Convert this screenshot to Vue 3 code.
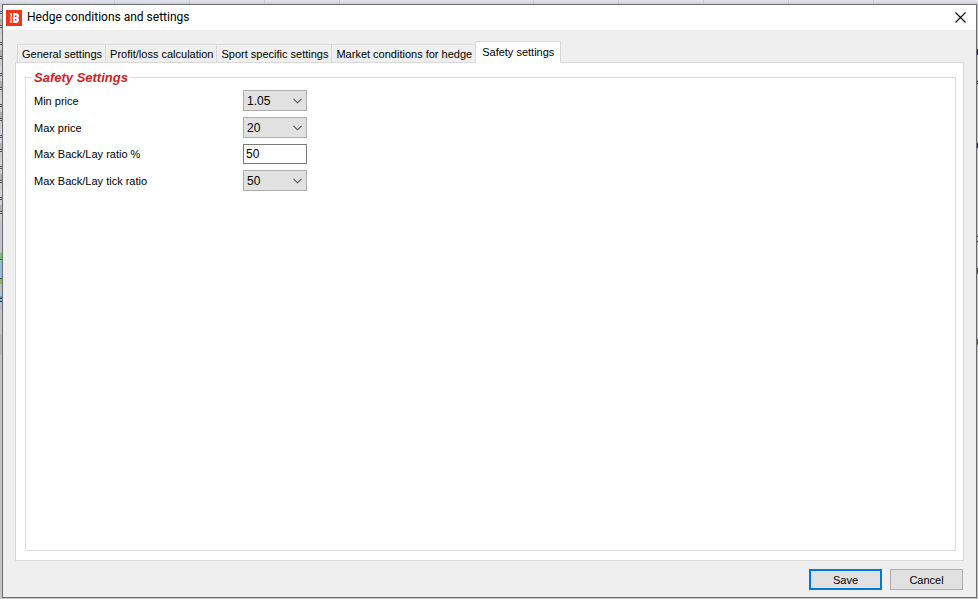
<script setup>
import { ref } from 'vue'

const tabs = [
  'General settings',
  'Profit/loss calculation',
  'Sport specific settings',
  'Market conditions for hedge',
  'Safety settings',
]
const activeTab = ref('Safety settings')

const fields = ref([
  { id: 'min-price', label: 'Min price', value: '1.05', options: ['1.01', '1.05', '1.10'] },
  { id: 'max-price', label: 'Max price', value: '20', options: ['10', '20', '50'] },
  { id: 'max-ratio', label: 'Max Back/Lay ratio %', value: '50' },
  { id: 'max-tick', label: 'Max Back/Lay tick ratio', value: '50', options: ['10', '20', '50'] },
])
</script>

<template>
  <div class="desktop">
    <div class="edge edge-left"></div>
    <main class="window">
      <header class="titlebar">
        <svg class="logo" viewBox="0 0 16 16" aria-hidden="true">
          <rect width="16" height="16" fill="#ee3616" />
          <path d="M3.500 3L6 3.500v3L5 8l1 1.500v3L3.500 13l1-2.500V9l-1-1 1-1V5.500z" fill="#fbd5cb" />
          <path d="M6.500 3H11l2 2v2l-1 1 1 1v2l-2 2H6.500l1-2.500L6.500 8l1-2.500z" fill="#fff" />
          <path d="M9 5.500h1.500v1.500H9zM9 9h1.500v1.500H9z" fill="#ee3616" />
        </svg>
        <h1>Hedge conditions and settings</h1>
        <button class="close" type="button" aria-label="Close">
          <svg viewBox="0 0 11 11" aria-hidden="true">
            <path d="M.5.5l10 10M10.5.5l-10 10" stroke="#000" stroke-width="1.1" fill="none" />
          </svg>
        </button>
      </header>

      <div class="body">
        <div class="tabs" role="tablist">
          <button
            v-for="tab in tabs"
            :key="tab"
            type="button"
            role="tab"
            class="tab"
            :class="{ active: tab === activeTab }"
            :aria-selected="tab === activeTab"
            @click="activeTab = tab"
          >{{ tab }}</button>
        </div>
        <section class="page" role="tabpanel">
          <fieldset class="group">
            <legend>Safety Settings</legend>
            <div class="rows">
              <div v-for="field in fields" :key="field.id" class="row">
                <label :for="field.id">{{ field.label }}</label>
                <div v-if="field.options" class="combo">
                  <select :id="field.id" v-model="field.value">
                    <option v-for="o in field.options" :key="o">{{ o }}</option>
                  </select>
                  <svg viewBox="0 0 9 6" aria-hidden="true">
                    <path d="M.5.8l4 4 4-4" fill="none" stroke="#505050" stroke-width="1.1" />
                  </svg>
                </div>
                <input v-else :id="field.id" v-model="field.value" type="text" />
              </div>
            </div>
          </fieldset>
        </section>
        <footer class="actions">
          <button type="button" class="btn primary">Save</button>
          <button type="button" class="btn">Cancel</button>
        </footer>
      </div>
    </main>
    <div class="edge edge-right"></div>
  </div>
</template>

<style>
body {
  margin: 0;
}
</style>

<style scoped>
* {
  box-sizing: border-box;
}

.desktop {
  display: grid;
  grid-template-columns: 2px minmax(0, 1fr) 1px;
  min-height: 100vh;
  padding: 4px 0 1px;
  background:
    linear-gradient(#c9c9d0, #c9c9d0) 114px 0 / 1px 4px no-repeat,
    linear-gradient(#c9c9d0, #c9c9d0) 189px 0 / 1px 4px no-repeat,
    linear-gradient(#c9c9d0, #c9c9d0) 264px 0 / 1px 4px no-repeat,
    linear-gradient(#c9c9d0, #c9c9d0) 339px 0 / 1px 4px no-repeat,
    linear-gradient(#c9c9d0, #c9c9d0) 533px 0 / 1px 4px no-repeat,
    linear-gradient(#c9c9d0, #c9c9d0) 618px 0 / 1px 4px no-repeat,
    linear-gradient(#c9c9d0, #c9c9d0) 703px 0 / 1px 4px no-repeat,
    linear-gradient(#c9c9d0, #c9c9d0) 788px 0 / 1px 4px no-repeat,
    linear-gradient(#c9c9d0, #c9c9d0) 873px 0 / 1px 4px no-repeat,
    linear-gradient(#e4e4ee, #d0d0da 4px, #c6c6c6 5px);
  font-family: "Liberation Sans", Arial, sans-serif;
  font-size: 11px;
  color: #000;
}

.edge-left {
  background:
    linear-gradient(
      transparent 248px, #75c46c 249px 255px, #555 255px 256px, #92bdd5 256px 274px,
      #555 274px 275px, #75c46c 275px 280px, #bcbcc4 280px 292px, #4aa3d8 292px 294px,
      #15264d 294px 295px, #92bdd5 295px 297px, #15264d 297px 298px, #b5bdce 298px 306px,
      #c6c6c6 306px 330px, #b8b8b8 330px 351px, #c6c6c6 351px
    ),
    linear-gradient(transparent 216px, #c5c5cf 216px),
    repeating-linear-gradient(
      #d2d2d8 0 7px, #555 7px 8px, #ccc 8px 9px, #555 9px 10px, #cfcfd8 10px 15px,
      #b0b0b0 15px 21px, #555 21px 22px, #ccc 22px 23px, #555 23px 24px, #ccc 24px 31px
    );
}

.edge-right {
  background: linear-gradient(
    #c3c3c8 45px, #281e50 45px 51px, #c3c3c8 51px 77px, #111 77px 78px, #c3c3c8 78px 79px,
    #111 79px 80px, #c3c3c8 80px 139px, #281e50 139px 144px, #c3c3c8 144px 232px,
    #111 232px 233px, #c3c3c8 233px 237px, #111 237px 238px, #c3c3c8 238px 264px,
    #604838 264px 270px, #c3c3c8 270px 335px, #55602c 335px 341px, #c3c3c8 341px
  );
}

.window {
  display: flex;
  flex-direction: column;
  border: 1px solid #6b6b6b;
  background: #efefef;
}

.titlebar {
  display: flex;
  align-items: center;
  height: 25px;
  padding: 0 10px 0 3px;
  background: #fff;
}

.logo {
  width: 16px;
  height: 16px;
}

h1 {
  flex: 1;
  margin: 0 0 0 5px;
  padding-bottom: 2px;
  font: 400 12px/16px Roboto, "Noto Sans", sans-serif;
}

.close {
  display: flex;
  padding: 0;
  border: 0;
  background: none;
}

.close svg {
  width: 11px;
  height: 11px;
}

.body {
  flex: 1;
  display: flex;
  flex-direction: column;
  padding: 11px 12px 7px;
}

.tabs {
  display: flex;
  align-items: flex-end;
  padding-left: 2px;
}

.tab {
  height: 18px;
  padding: 0 3px 0 4px;
  border: 1px solid #d9d9d9;
  border-width: 1px 0 0 1px;
  background: #efefef;
  color: inherit;
  font: inherit;
  line-height: 18px;
  white-space: nowrap;
}

.tab.active {
  z-index: 1;
  height: 22px;
  margin-bottom: -1px;
  padding: 0 6px 1px;
  border-right-width: 1px;
  background: #fff;
}

.page {
  flex: 1;
  display: flex;
  padding: 6px 7px 9px 9px;
  border: 1px solid #d9d9d9;
  background: #fff;
}

.group {
  flex: 1;
  min-width: 0;
  margin: 0;
  padding: 5px 8px;
  border: 1px solid #dcdcdc;
}

legend {
  margin-left: -2px;
  padding: 2px 2px 0;
  color: #d8201c;
  font-size: 13px;
  font-style: italic;
  font-weight: 700;
  line-height: 14px;
}

.rows {
  display: grid;
  gap: 6px;
}

.row {
  display: grid;
  grid-template-columns: 209px 64px;
  align-items: center;
}

label {
  line-height: 14px;
}

.combo {
  display: grid;
  align-items: center;
}

.combo > * {
  grid-area: 1 / 1;
}

.combo svg {
  width: 9px;
  height: 6px;
  margin-right: 5px;
  justify-self: end;
  pointer-events: none;
}

select {
  appearance: none;
  width: 100%;
  height: 21px;
  padding: 0 16px 0 3px;
  border: 1px solid #adadad;
  border-radius: 0;
  background: #e1e1e1;
  color: inherit;
  font: inherit;
  font-size: 12px;
}

input {
  width: 100%;
  height: 20px;
  padding: 0 2px;
  border: 1px solid #7a7a7a;
  background: #fff;
  color: inherit;
  font: inherit;
  font-size: 12px;
}

.actions {
  display: flex;
  justify-content: flex-end;
  gap: 8px;
  padding: 8px 1px 0 0;
}

.btn {
  width: 73px;
  height: 21px;
  padding: 0;
  border: 1px solid #adadad;
  background: #e1e1e1;
  color: inherit;
  font: inherit;
}

.btn.primary {
  border: 2px solid #0078d7;
}
</style>
